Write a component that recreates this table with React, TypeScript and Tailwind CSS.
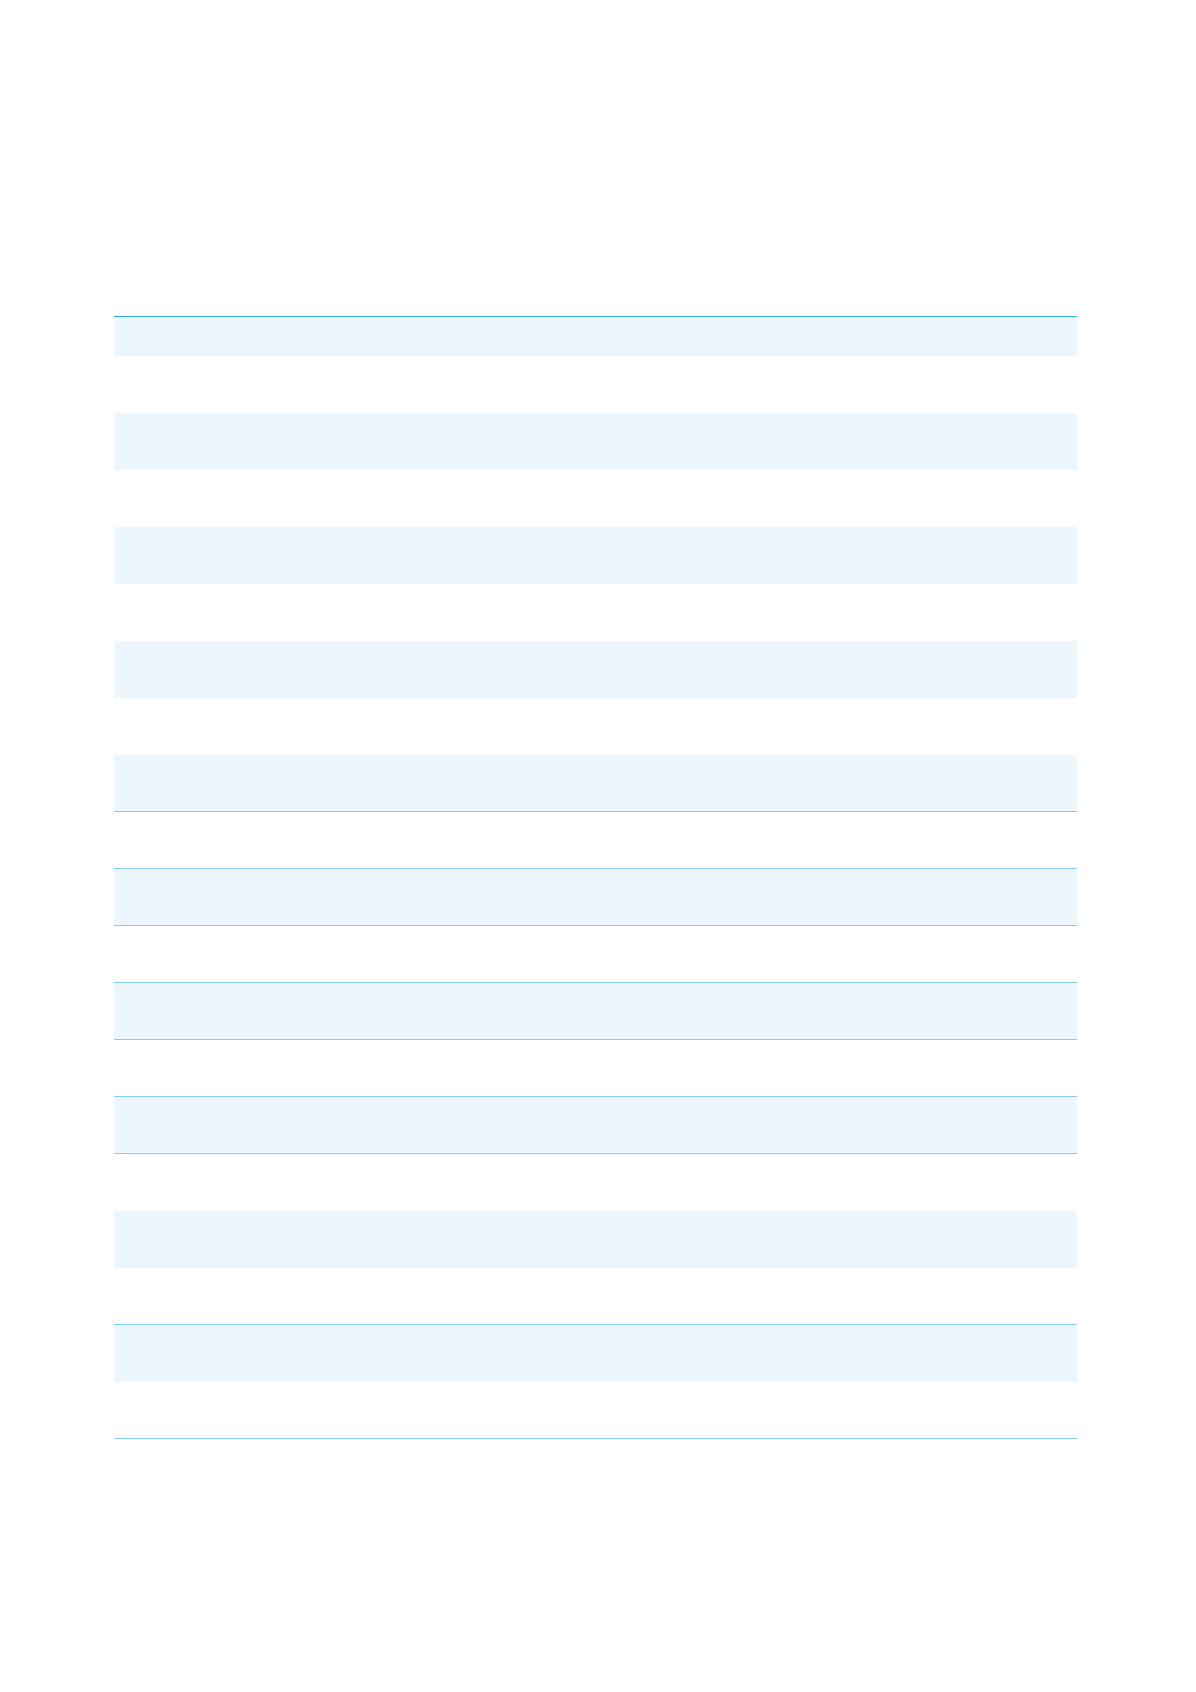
const rows = Array.from({ length: 19 }, (_, i) => ({
  striped: i % 2 === 1,
  ruled: (i >= 7 && i <= 13) || i === 16 || i === 18,
}));

export default function App() {
  return (
    <div className="min-h-[1692px] bg-white font-['Liberation_Sans',sans-serif]">
      <div className="ml-[114px] w-[963px] pt-[316px]">
        {/* header row */}
        <div className="h-[40px] border-t border-[#29abe2] bg-[#eef6fd]" />
        {rows.map((row, i) => (
          <div
            key={i}
            className={`h-[57px] ${row.striped ? 'bg-[#eef6fd]' : 'bg-white'} ${
              row.ruled ? 'border-b border-[#86ccef]' : ''
            }`}
          />
        ))}
      </div>
    </div>
  );
}
